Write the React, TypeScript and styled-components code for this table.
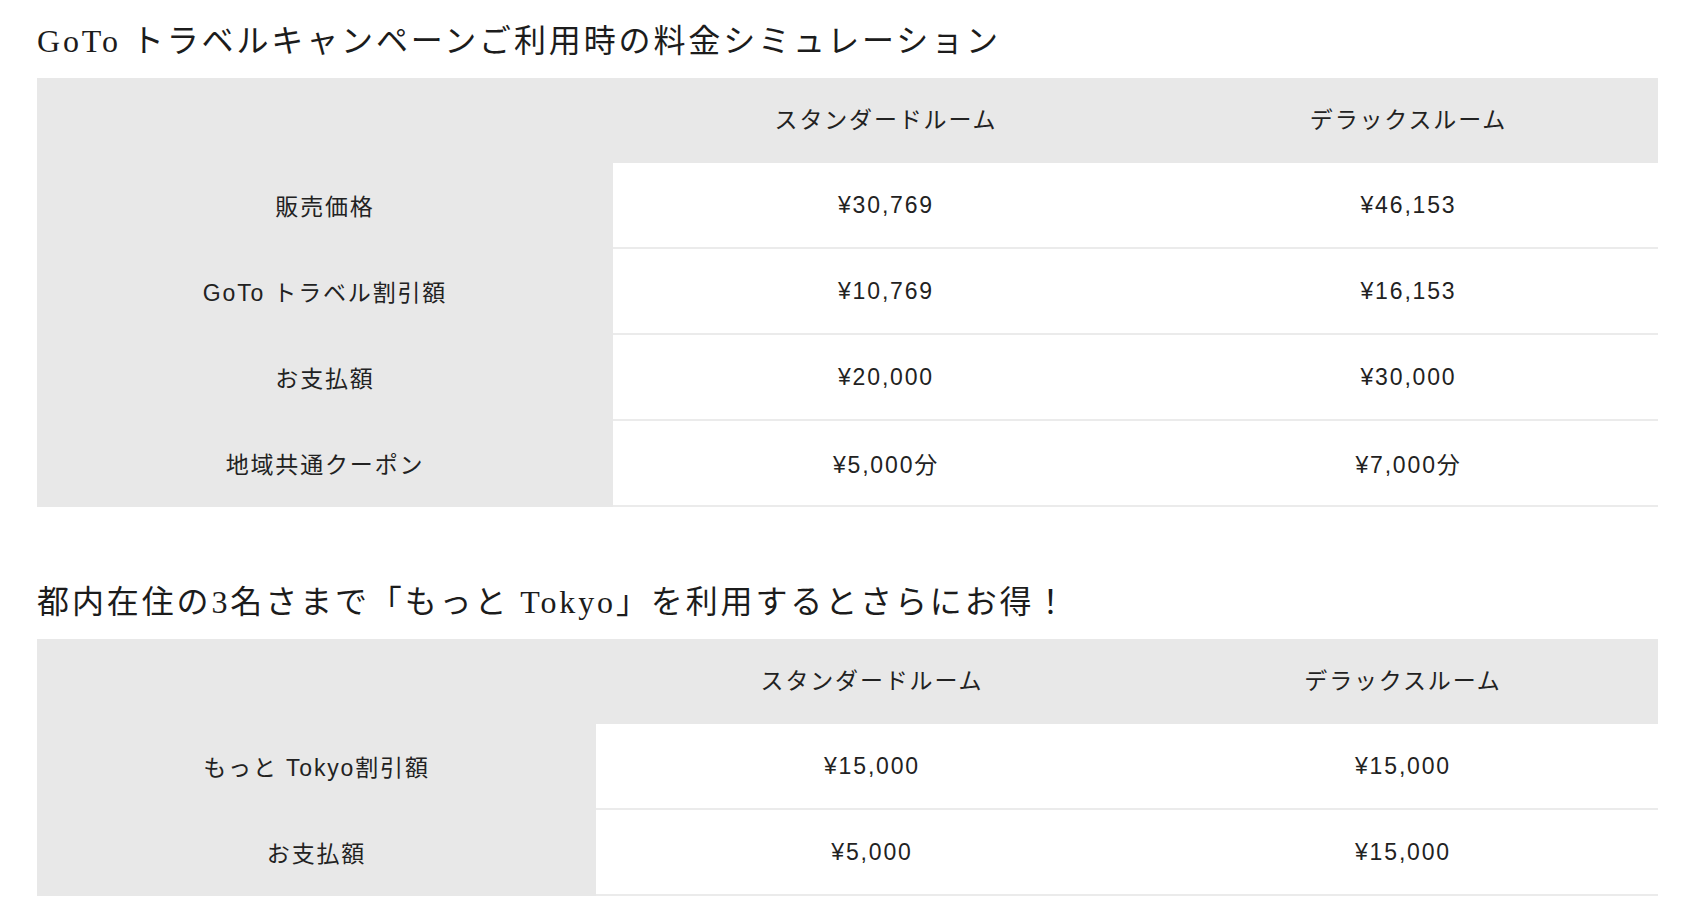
import React from "react";
import styled, { createGlobalStyle } from "styled-components";

const GlobalStyle = createGlobalStyle`
  body {
    margin: 0;
    background: #fff;
    color: #222;
  }
`;

const Page = styled.div`
  padding: 0 34px 20px 37px;
`;

const Title = styled.h2<{ first?: boolean }>`
  margin: 0;
  font-family: "Liberation Serif", "Noto Sans CJK JP", serif;
  font-weight: 400;
  font-size: 32px;
  line-height: 45px;
  letter-spacing: 0.09em;
  color: #1c1c1c;
  white-space: nowrap;
  padding: ${(p) => (p.first ? "19px 0 14px" : "73px 0 14px")};
`;

const Table = styled.div<{ cols: string }>`
  display: grid;
  grid-template-columns: ${(p) => p.cols};
  font-family: "Liberation Sans", "Noto Sans CJK JP", sans-serif;
  font-size: 23px;
  letter-spacing: 0.08em;
  color: #222;
`;

const Cell = styled.div<{ head?: boolean; top?: boolean }>`
  height: ${(p) => (p.top ? "85px" : "86px")};
  padding-bottom: ${(p) => (p.top ? "3px" : "0")};
  box-sizing: border-box;
  display: flex;
  align-items: center;
  justify-content: center;
  white-space: nowrap;
  background: ${(p) => (p.head ? "#e8e8e8" : "#fff")};
  border-bottom: 2px solid ${(p) => (p.head ? "#e8e8e8" : "#ebebeb")};
`;

type Row = { label: string; values: string[] };

const rooms = ["スタンダードルーム", "デラックスルーム"];

const gotoRows: Row[] = [
  { label: "販売価格", values: ["¥30,769", "¥46,153"] },
  { label: "GoTo トラベル割引額", values: ["¥10,769", "¥16,153"] },
  { label: "お支払額", values: ["¥20,000", "¥30,000"] },
  { label: "地域共通クーポン", values: ["¥5,000分", "¥7,000分"] },
];

const tokyoRows: Row[] = [
  { label: "もっと Tokyo割引額", values: ["¥15,000", "¥15,000"] },
  { label: "お支払額", values: ["¥5,000", "¥15,000"] },
];

const PriceTable = ({ rows, cols }: { rows: Row[]; cols: string }) => (
  <Table cols={cols}>
    <Cell head top />
    {rooms.map((r) => (
      <Cell head top key={r}>
        {r}
      </Cell>
    ))}
    {rows.map((row) => (
      <React.Fragment key={row.label}>
        <Cell head>{row.label}</Cell>
        {row.values.map((v, i) => (
          <Cell key={i}>{v}</Cell>
        ))}
      </React.Fragment>
    ))}
  </Table>
);

const App = () => (
  <Page>
    <GlobalStyle />
    <Title first>GoTo トラベルキャンペーンご利用時の料金シミュレーション</Title>
    <PriceTable rows={gotoRows} cols="576px 546px 1fr" />
    <Title>都内在住の3名さまで「もっと Tokyo」を利用するとさらにお得！</Title>
    <PriceTable rows={tokyoRows} cols="559px 552px 1fr" />
  </Page>
);

export default App;
